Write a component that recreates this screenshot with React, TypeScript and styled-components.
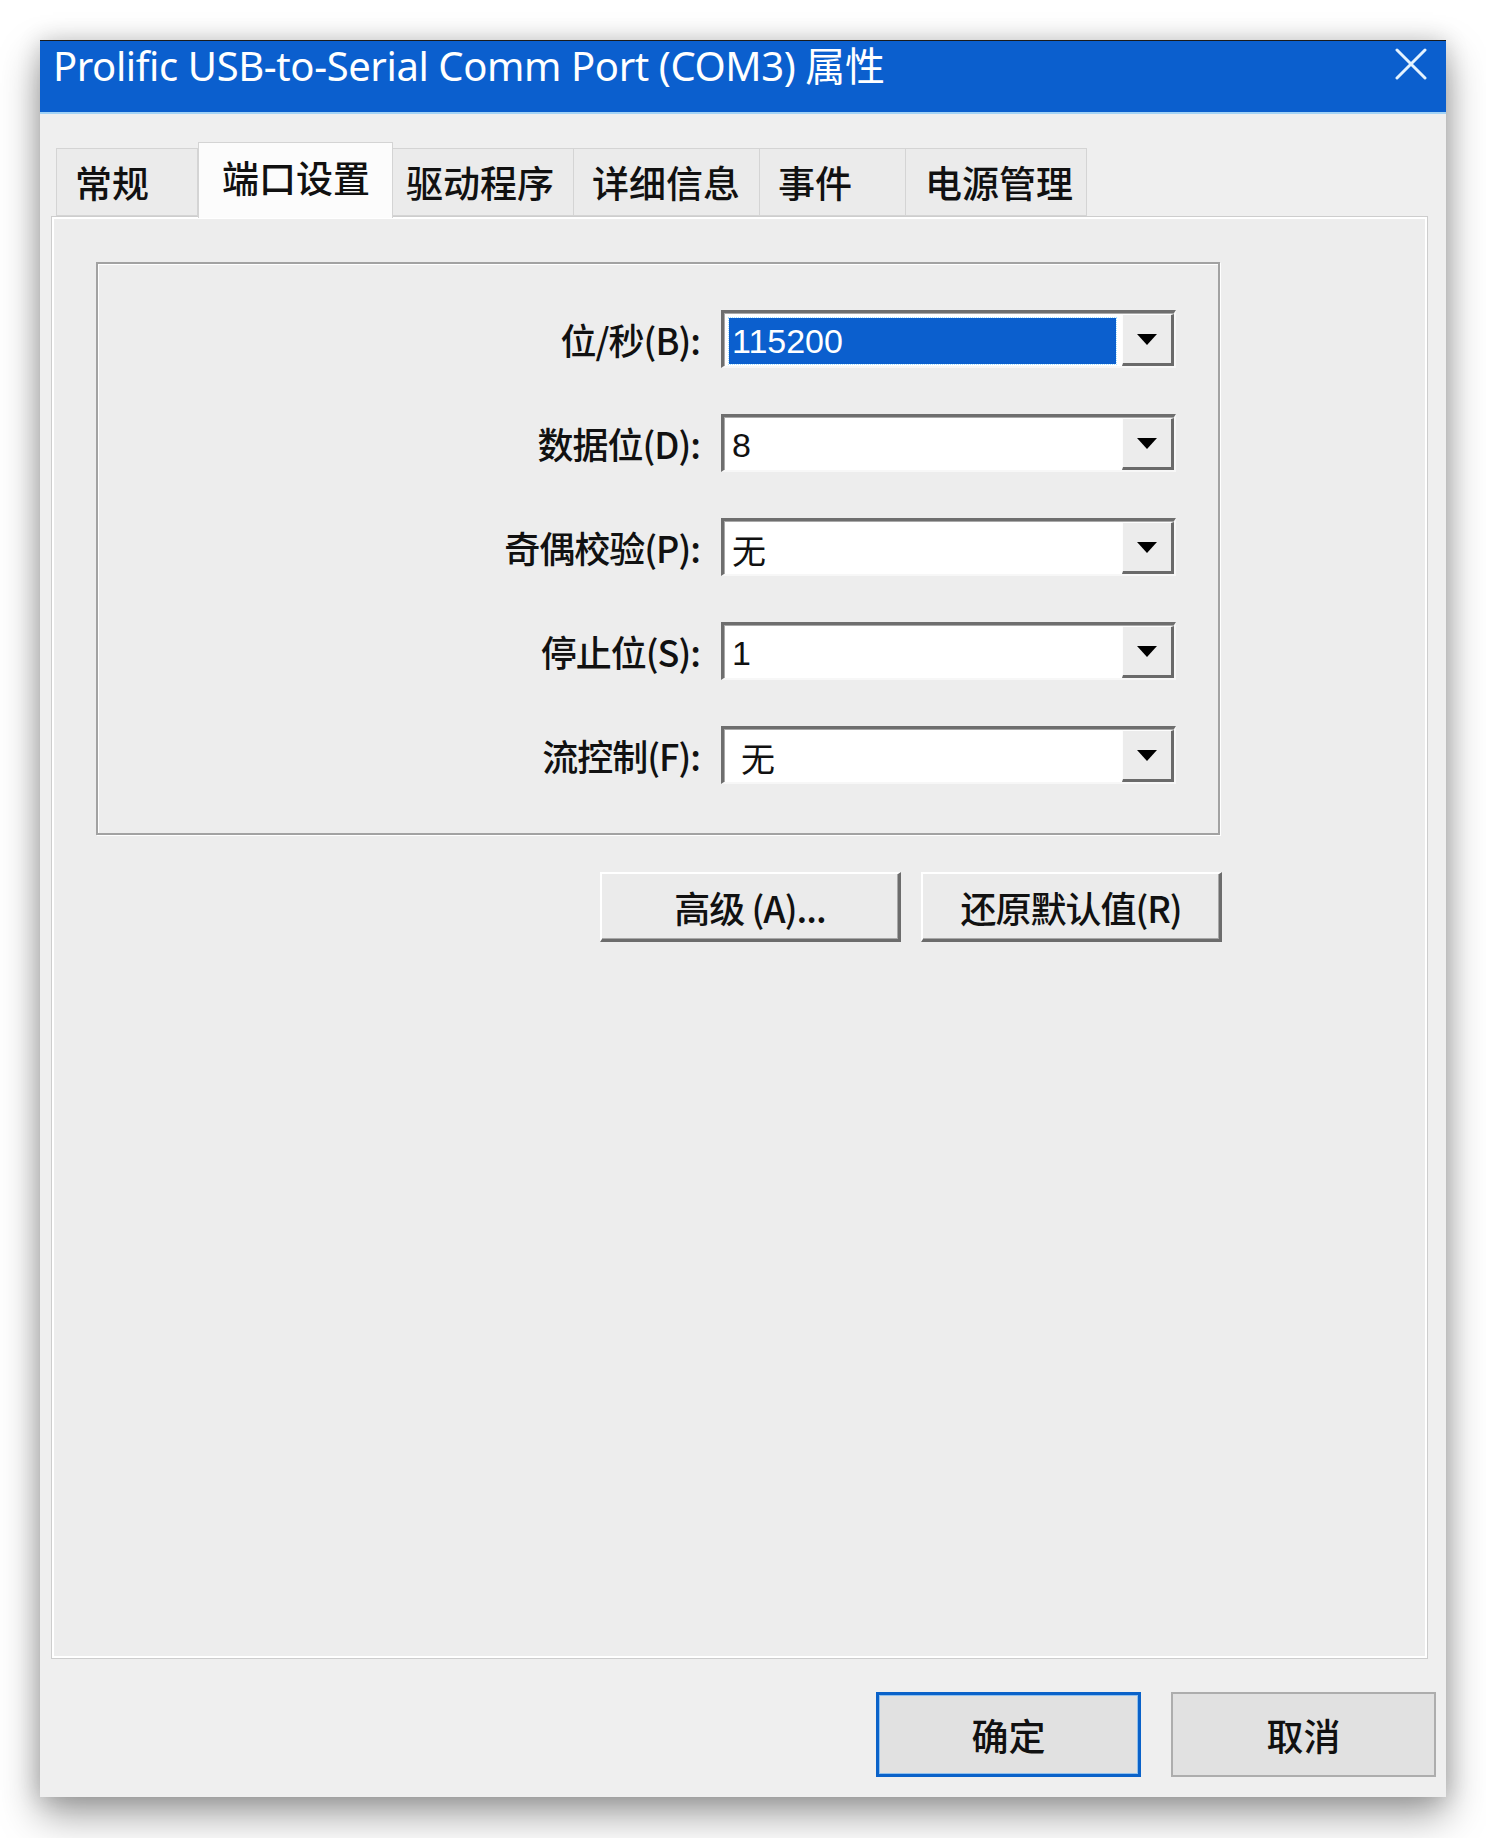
import React from "react"
import styled, { createGlobalStyle } from "styled-components"

const GlobalStyle = createGlobalStyle`
    html, body {
        margin: 0;
        padding: 0;
        background: #ffffff;
    }
    body {
        font-family: "Noto Sans CJK SC", "Noto Sans", sans-serif;
    }
`

const CJK = `"Noto Sans CJK SC", "Noto Sans", sans-serif`

const Page = styled.div`
    padding: 40px 40px 41px 40px;
`

const Window = styled.div`
    width: 1406px;
    height: 1757px;
    background: #efefef;
    display: flex;
    flex-direction: column;
    box-shadow: 0 18px 38px rgba(0, 0, 0, 0.38), 0 0 22px rgba(0, 0, 0, 0.16);
`

const TitleBar = styled.div`
    height: 71px;
    flex-shrink: 0;
    background: #0b5fce;
    border-top: 1px solid #1a1a1a;
    border-bottom: 2px solid #a3d3f6;
    display: flex;
    align-items: flex-start;
    justify-content: space-between;
    padding: 0 19px 0 13px;
`

const Title = styled.div`
    font-family: "Noto Sans", ${CJK};
    font-size: 40px;
    line-height: 50px;
    color: #ffffff;
    white-space: nowrap;
    letter-spacing: -0.4px;
`

const CloseBtn = styled.div`
    margin-top: 7px;
    width: 32px;
    height: 32px;
`

const Content = styled.div`
    flex: 1;
    display: flex;
    flex-direction: column;
    padding: 28px 10px 20px 11px;
`

const TabRow = styled.div`
    display: flex;
    align-items: flex-end;
    height: 74px;
    padding-left: 5px;
    position: relative;
    z-index: 1;
`

const Tab = styled.div<{ $w: number; $pad: number; $active?: boolean }>`
    box-sizing: border-box;
    width: ${p => p.$w}px;
    height: ${p => (p.$active ? 76 : 68)}px;
    margin-bottom: ${p => (p.$active ? -2 : 0)}px;
    padding-left: ${p => p.$pad}px;
    display: flex;
    align-items: center;
    padding-bottom: ${p => (p.$active ? 8 : 0)}px;
    background: ${p => (p.$active ? "#fcfcfc" : "#ebebeb")};
    border: 1px solid #d4d4d4;
    border-bottom: ${p => (p.$active ? "none" : "1px solid #d4d4d4")};
    border-left: ${p => (p.$active ? "1px solid #d4d4d4" : "none")};
    font-family: ${CJK};
    font-size: 37px;
    font-weight: 500;
    color: #111111;
    white-space: nowrap;
    &:first-child {
        border-left: 1px solid #d4d4d4;
    }
`

const Panel = styled.div`
    flex: 1;
    margin-right: 8px;
    background: #ededed;
    border: 1px solid #cdcdcd;
    box-shadow: inset 2px 2px 0 #ffffff, inset -2px -2px 0 #ffffff;
    padding: 45px 0 0 44px;
    display: flex;
    flex-direction: column;
`

const GroupBox = styled.div`
    box-sizing: border-box;
    width: 1124px;
    height: 573px;
    border: 2px solid #a2a2a2;
    box-shadow: inset 1px 1px 0 #ffffff, 1px 1px 0 #ffffff;
    padding: 46px 42px 0 0;
    display: grid;
    grid-template-columns: 1fr 455px;
    grid-auto-rows: 58px;
    column-gap: 21px;
    row-gap: 46px;
`

const Label = styled.div`
    align-self: center;
    text-align: right;
    font-family: ${CJK};
    font-size: 36px;
    font-weight: 500;
    color: #111111;
    white-space: nowrap;
    letter-spacing: -1px;
`

const Combo = styled.div`
    box-sizing: border-box;
    height: 58px;
    display: flex;
    background: #ffffff;
    border-style: solid;
    border-width: 3px 2px 2px 3px;
    border-color: #6e6e6e #f7f7f7 #f7f7f7 #6e6e6e;
    box-shadow: inset 1px 1px 0 #a9a9a9;
`

const ComboText = styled.div<{ $selected?: boolean; $indent?: number }>`
    flex: 1;
    margin: 5px 6px 2px 5px;
    padding-left: ${p => p.$indent ?? 3}px;
    display: flex;
    align-items: center;
    font-family: "Liberation Sans", ${CJK};
    font-size: 34px;
    color: ${p => (p.$selected ? "#ffffff" : "#111111")};
    background: ${p => (p.$selected ? "#0b5fce" : "transparent")};
    outline: ${p => (p.$selected ? "1px dotted #a6e0ff" : "none")};
`

const DropButton = styled.div`
    box-sizing: border-box;
    width: 52px;
    margin: 1px 0 0 0;
    background: #ececec;
    border-style: solid;
    border-width: 1px 3px 3px 1px;
    border-color: #fdfdfd #6a6a6a #6a6a6a #fdfdfd;
    display: flex;
    align-items: center;
    justify-content: center;
`

const Arrow = styled.div`
    width: 0;
    height: 0;
    border-left: 10px solid transparent;
    border-right: 10px solid transparent;
    border-top: 11px solid #000000;
`

const ActionRow = styled.div`
    width: 1126px;
    margin-top: 37px;
    display: flex;
    justify-content: flex-end;
    gap: 20px;
`

const RaisedButton = styled.div`
    box-sizing: border-box;
    width: 301px;
    height: 70px;
    background: #ebebeb;
    border-style: solid;
    border-width: 2px 3px 3px 2px;
    border-color: #ffffff #6c6c6c #6c6c6c #ffffff;
    box-shadow: inset -1px -1px 0 #a8a8a8;
    display: flex;
    align-items: center;
    justify-content: center;
    font-family: ${CJK};
    font-size: 36px;
    font-weight: 500;
    color: #111111;
    letter-spacing: -1px;
    white-space: nowrap;
`

const Footer = styled.div`
    margin-top: 33px;
    display: flex;
    justify-content: flex-end;
    gap: 30px;
`

const DialogButton = styled.div<{ $default?: boolean }>`
    box-sizing: border-box;
    width: 265px;
    height: 85px;
    background: #e1e1e1;
    border: ${p => (p.$default ? "3px solid #0a62c9" : "2px solid #adadad")};
    box-shadow: ${p => (p.$default ? "inset 0 0 0 1px #8fc0ee" : "none")};
    display: flex;
    align-items: center;
    justify-content: center;
    font-family: ${CJK};
    font-size: 37px;
    font-weight: 500;
    color: #111111;
`

const tabs = [
    { label: "常规", w: 142, pad: 18 },
    { label: "端口设置", w: 195, pad: 23, active: true },
    { label: "驱动程序", w: 181, pad: 13 },
    { label: "详细信息", w: 186, pad: 18 },
    { label: "事件", w: 146, pad: 18 },
    { label: "电源管理", w: 181, pad: 19 },
]

const fields = [
    { label: "位/秒(B):", value: "115200", selected: true },
    { label: "数据位(D):", value: "8" },
    { label: "奇偶校验(P):", value: "无" },
    { label: "停止位(S):", value: "1" },
    { label: "流控制(F):", value: "无", indent: 12 },
]

export default function App() {
    return (
        <Page>
            <GlobalStyle />
            <Window>
                <TitleBar>
                    <Title>Prolific USB-to-Serial Comm Port (COM3) 属性</Title>
                    <CloseBtn>
                        <svg width="32" height="32" viewBox="0 0 32 32">
                            <path d="M2 2 L30 30 M30 2 L2 30" stroke="#e4f3ff" strokeWidth="3" strokeLinecap="round" />
                        </svg>
                    </CloseBtn>
                </TitleBar>
                <Content>
                    <TabRow>
                        {tabs.map(t => (
                            <Tab key={t.label} $w={t.w} $pad={t.pad} $active={t.active}>
                                {t.label}
                            </Tab>
                        ))}
                    </TabRow>
                    <Panel>
                        <GroupBox>
                            {fields.map(f => (
                                <React.Fragment key={f.label}>
                                    <Label>{f.label}</Label>
                                    <Combo>
                                        <ComboText $selected={f.selected} $indent={f.indent}>
                                            {f.value}
                                        </ComboText>
                                        <DropButton>
                                            <Arrow />
                                        </DropButton>
                                    </Combo>
                                </React.Fragment>
                            ))}
                        </GroupBox>
                        <ActionRow>
                            <RaisedButton>高级 (A)...</RaisedButton>
                            <RaisedButton>还原默认值(R)</RaisedButton>
                        </ActionRow>
                    </Panel>
                    <Footer>
                        <DialogButton $default>确定</DialogButton>
                        <DialogButton>取消</DialogButton>
                    </Footer>
                </Content>
            </Window>
        </Page>
    )
}
